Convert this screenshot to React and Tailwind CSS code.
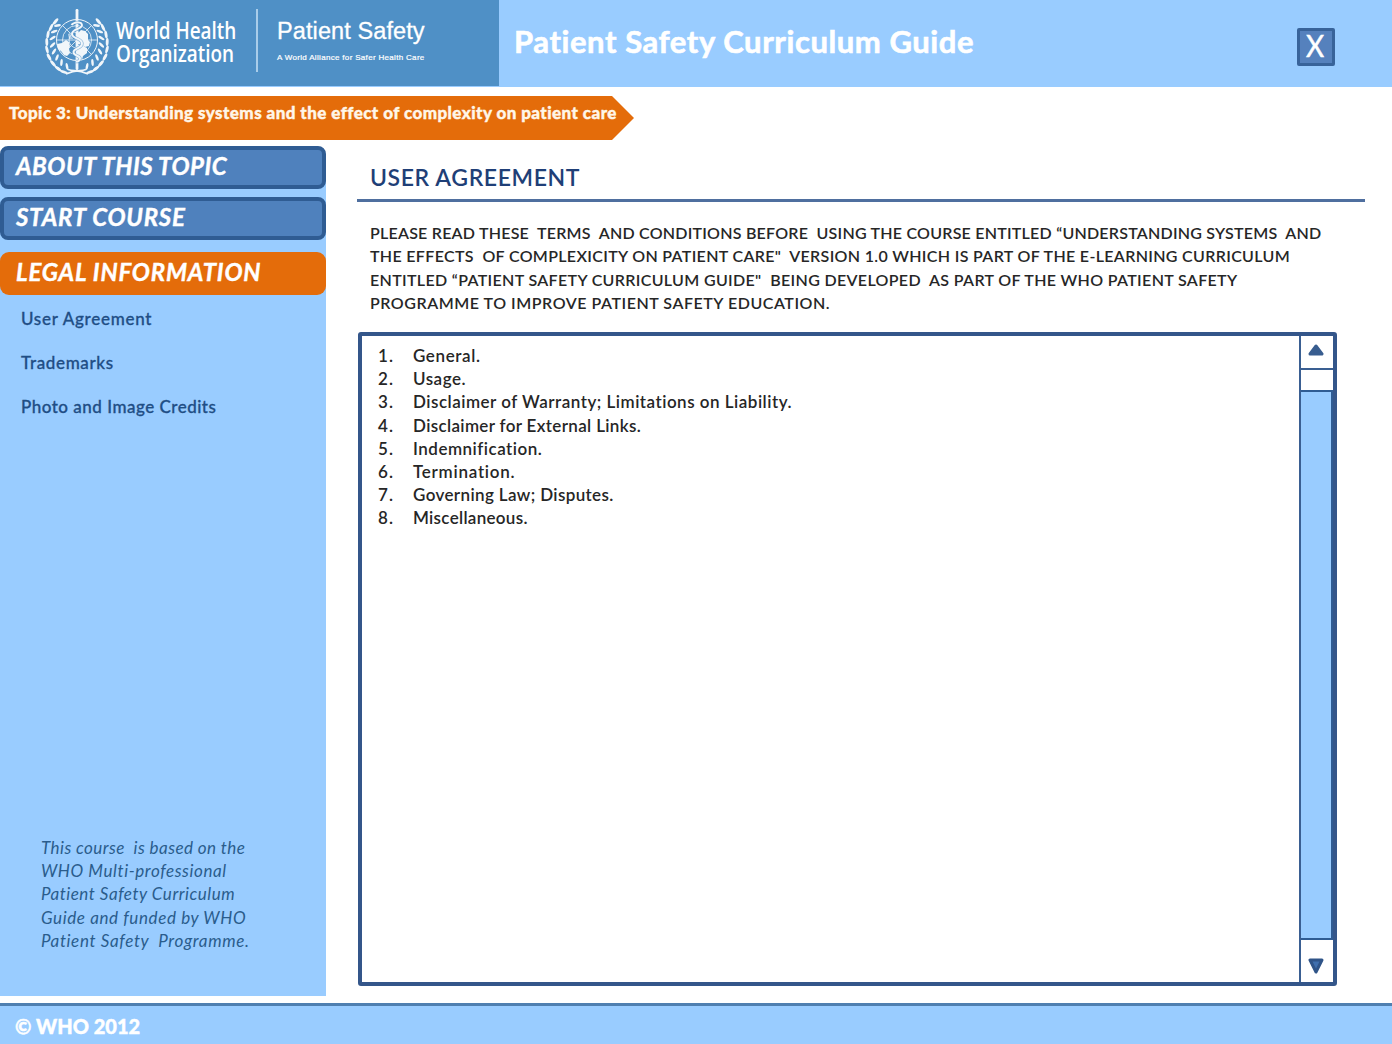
import React from "react";

function Line({ children, className = "" }) {
  return <div className={"whitespace-pre " + className}>{children}</div>;
}

const OUTER_LEAVES = [
  [20, 64, 20], [14, 60.5, 38], [9, 55.5, 50], [5, 49, 62], [3, 41.5, 76], [2.8, 34, 88], [4, 26.5, 100], [7, 19.5, 115], [11.5, 13.5, 130],
];
const INNER_LEAVES = [
  [23, 58.5, 80], [17.5, 54.5, 95], [13, 49.5, 110], [10, 43.5, 122], [8.6, 37, 135], [8.6, 30, 148], [10.2, 23.5, 160], [13.5, 17.5, 172],
];

function Wreath() {
  return (
    <g>
      {OUTER_LEAVES.map(([x, y, a]) => (
        <ellipse key={"o" + y} cx={x} cy={y} rx="4" ry="1.45" transform={`rotate(${a} ${x} ${y})`} fill="#fff" />
      ))}
      {INNER_LEAVES.map(([x, y, a]) => (
        <ellipse key={"i" + y} cx={x} cy={y} rx="3.5" ry="1.25" transform={`rotate(${a} ${x} ${y})`} fill="#fff" />
      ))}
      <path d="M24 61.500C30 64 33 60.500 44 66" fill="none" stroke="#fff" strokeWidth="1.7" />
    </g>
  );
}

function Emblem() {
  return (
    <svg viewBox="0 0 66 68" className="h-[68px] w-[66px] shrink-0" opacity="0.92">
      <Wreath />
      <g transform="translate(66 0) scale(-1 1)">
        <Wreath />
      </g>
      <g fill="none" stroke="#fff" strokeWidth="1">
        <circle cx="33" cy="32" r="20.5" />
        <circle cx="33" cy="32" r="14.500" strokeWidth="0.8" />
        <circle cx="33" cy="32" r="8" strokeWidth="0.8" />
        <path d="M12.500 32h41M18.500 17.500l29 29M47.500 17.500l-29 29" strokeWidth="0.8" />
      </g>
      <g fill="#fff">
        <path d="M13 36l5-1 4-3 3 2 1 4-1 3 1 4-3 3-3-1-3-4-3-2z" />
        <path d="M34 25l3-3 4 1 3 3v6l2 2-1 4-4 1-3-2-4-1z" />
        <path d="M34 37l5 1 4 2 0 5-4 3-1 4-4 1z" />
        <path d="M24 26l4-2 2 3-1 4-4 0z" opacity="0.6" />
        <rect x="31.600" y="1" width="2.800" height="61" rx="1.200" />
      </g>
      <path
        d="M27.500 17c2-3 10-4 10.500 0s-10 4-10 9 10 4 10 9.500-8.500 4-8.500 8.500 6.500 3 6.500 6.500-4 3-4 3"
        fill="none"
        stroke="#4f90c6"
        strokeWidth="3.400"
        opacity="0.6"
      />
      <path
        d="M27.500 17c2-3 10-4 10.500 0s-10 4-10 9 10 4 10 9.500-8.500 4-8.500 8.500 6.500 3 6.500 6.500-4 3-4 3"
        fill="none"
        stroke="#fff"
        strokeWidth="1.900"
      />
    </svg>
  );
}

function Header() {
  return (
    <header className="flex h-[87px] shrink-0 bg-[#99ccff]">
      <div className="flex h-[86px] w-[499px] shrink-0 bg-[#4f90c6] pt-[8px] pl-[44px] text-white">
        <Emblem />
        <div className="ml-[6px] w-[140px] pt-[11px] font-['Open_Sans'] text-[23px] leading-[23px] font-semibold">
          <div className="origin-left scale-x-[0.822] whitespace-pre">
            World Health
            <br />
            Organization
          </div>
        </div>
        <div className="mt-px h-[63px] w-[2px] bg-[#a9cdea]" />
        <div className="ml-[19px] pt-[10px] font-['Liberation_Sans']">
          <Line className="text-[23.5px] leading-[27px] tracking-[0.1px] [-webkit-text-stroke:0.3px_white]">Patient Safety</Line>
          <Line className="mt-[7px] text-[8px] leading-[12px] tracking-[0.32px] [-webkit-text-stroke:0.2px_white]">
            A World Alliance for Safer Health Care
          </Line>
        </div>
      </div>
      <h1 className="flex-1 pt-[21px] pl-[15px] text-[31px] leading-[40px] font-bold tracking-[0.58px] whitespace-pre text-white [-webkit-text-stroke:0.6px_white]">
        Patient Safety Curriculum Guide
      </h1>
      <button className="mt-[28px] mr-[57px] flex h-[38px] w-[38px] items-center justify-center rounded-[2px] border-[3px] border-[#38639a] bg-[#5581bd] pr-[2px] pb-[4px] text-[31px] leading-none text-white">
        <span className="scale-x-90 [-webkit-text-stroke:0.5px_white]">X</span>
      </button>
    </header>
  );
}

function Sidebar() {
  const button = "flex h-[43px] items-center rounded-[8px] border-4 border-[#2f5c93] bg-[#4f81bd] pb-[3px] pl-[12px]";
  return (
    <aside className="flex w-[326px] flex-col bg-linear-to-b from-white from-[8px] to-[#99ccff] to-[8px]">
      <nav className="text-[24px] leading-[30px] font-bold text-white italic [-webkit-text-stroke:0.4px_white]">
        <div className={button}>
          <Line className="tracking-[0.5px]">ABOUT THIS TOPIC</Line>
        </div>
        <div className={"mt-[8px] " + button}>
          <Line className="tracking-[0.75px]">START COURSE</Line>
        </div>
        <div className="mt-[12px] flex h-[43px] items-center rounded-[9px] bg-[#e46c0a] pb-[3px] pl-[16px]">
          <Line className="tracking-[0.82px]">LEGAL INFORMATION</Line>
        </div>
      </nav>
      <ul className="mt-[12px] flex flex-col gap-[20px] pl-[21px] text-[17px] leading-[24px] font-medium text-[#1f4e85] [-webkit-text-stroke:0.3px_#1f4e85]">
        <li><Line className="tracking-[0.72px]">User Agreement</Line></li>
        <li><Line className="tracking-[0.65px]">Trademarks</Line></li>
        <li><Line className="tracking-[0.5px]">Photo and Image Credits</Line></li>
      </ul>
      <div className="mt-auto mb-[44px] pl-[41px] text-[17px] leading-[23.25px] text-[#2a5c8c] italic">
        <Line className="tracking-[0.44px]">{"This course  is based on the"}</Line>
        <Line className="tracking-[0.6px]">WHO Multi-professional</Line>
        <Line className="tracking-[0.53px]">Patient Safety Curriculum</Line>
        <Line className="tracking-[0.62px]">Guide and funded by WHO</Line>
        <Line className="tracking-[0.65px]">{"Patient Safety  Programme."}</Line>
      </div>
    </aside>
  );
}

const TERMS = [
  ["General.", "tracking-[0.6px]"],
  ["Usage.", "tracking-[0.5px]"],
  ["Disclaimer of Warranty; Limitations on Liability.", "tracking-[0.5px]"],
  ["Disclaimer for External Links.", "tracking-[0.35px]"],
  ["Indemnification.", "tracking-[0.5px]"],
  ["Termination.", "tracking-[0.75px]"],
  ["Governing Law; Disputes.", "tracking-[0.37px]"],
  ["Miscellaneous.", "tracking-[0.3px]"],
];

function ScrollBar() {
  return (
    <div className="flex w-[34px] shrink-0 flex-col border-l-2 border-[#3a5f92]">
      <div className="flex h-[34px] items-center justify-center border-b-2 border-[#3a5f92] pr-[3px] pb-[4px]">
        <svg viewBox="0 0 16 12" className="h-[12px] w-[16px]">
          <path d="M8 2L14 10H2z" fill="#385d8f" stroke="#385d8f" strokeWidth="3" strokeLinejoin="round" />
        </svg>
      </div>
      <div className="h-[20px]" />
      <div className="flex-1 border-y-2 border-r-2 border-[#2f5c93] bg-[#99ccff]" />
      <div className="flex h-[42px] items-center justify-center pt-[10px] pr-[3px]">
        <svg viewBox="0 0 16 16" className="h-[16px] w-[16px]">
          <path d="M2 2H14L8 14z" fill="#3f6fae" stroke="#2f5488" strokeWidth="3" strokeLinejoin="round" />
        </svg>
      </div>
    </div>
  );
}

function Agreement() {
  return (
    <main className="flex flex-1 flex-col pl-[31px]">
      <h2 className="mr-[27px] h-[56px] border-b-[3px] border-[#4f6f9f] pt-[16px] pl-[13px] text-[23px] leading-[30px] font-semibold tracking-[0.6px] whitespace-pre text-[#1f3f77]">
        USER AGREEMENT
      </h2>
      <div className="mt-[19px] pl-[13px] text-[16px] leading-[23.25px] font-semibold text-[#262626]">
        <Line className="tracking-[0.23px]">{"PLEASE READ THESE  TERMS  AND CONDITIONS BEFORE  USING THE COURSE ENTITLED “UNDERSTANDING SYSTEMS  AND"}</Line>
        <Line className="tracking-[0.33px]">{"THE EFFECTS  OF COMPLEXICITY ON PATIENT CARE\"  VERSION 1.0 WHICH IS PART OF THE E-LEARNING CURRICULUM"}</Line>
        <Line className="tracking-[0.34px]">{"ENTITLED “PATIENT SAFETY CURRICULUM GUIDE\"  BEING DEVELOPED  AS PART OF THE WHO PATIENT SAFETY"}</Line>
        <Line className="tracking-[0.54px]">PROGRAMME TO IMPROVE PATIENT SAFETY EDUCATION.</Line>
      </div>
      <section className="mt-[18px] ml-px flex h-[654px] w-[979px] rounded-[3px] border-4 border-[#34568a]">
        <ol className="flex-1 pt-[8px] pl-[16px] text-[17px] leading-[23.2px] font-semibold text-[#262626]">
          {TERMS.map(([text, tracking], i) => (
            <li key={text} className="flex">
              <span className="w-[35px] tracking-[1px]">{i + 1}.</span>
              <Line className={tracking}>{text}</Line>
            </li>
          ))}
        </ol>
        <ScrollBar />
      </section>
    </main>
  );
}

export default function App() {
  return (
    <div className="flex h-[1044px] w-[1392px] flex-col overflow-hidden bg-white font-[Lato,sans-serif]">
      <Header />
      <div className="mt-[9px] h-[44px] w-[634px] shrink-0 bg-[#e46c0a] pt-[5px] pl-[9px] [clip-path:polygon(0_0,612px_0,634px_50%,612px_100%,0_100%)]">
        <Line className="text-[17px] leading-[24px] font-black tracking-[0.43px] text-[#fff6e8] [-webkit-text-stroke:0.4px_#fff6e8]">
          Topic 3: Understanding systems and the effect of complexity on patient care
        </Line>
      </div>
      <div className="mt-[6px] flex h-[850px] shrink-0">
        <Sidebar />
        <Agreement />
      </div>
      <footer className="mt-[7px] flex-1 border-t-[3px] border-[#4f7fb0] bg-[#99ccff] pt-[8px] pl-[15px]">
        <Line className="text-[20px] leading-[24px] font-black text-white [-webkit-text-stroke:0.4px_white]">© WHO 2012</Line>
      </footer>
    </div>
  );
}
